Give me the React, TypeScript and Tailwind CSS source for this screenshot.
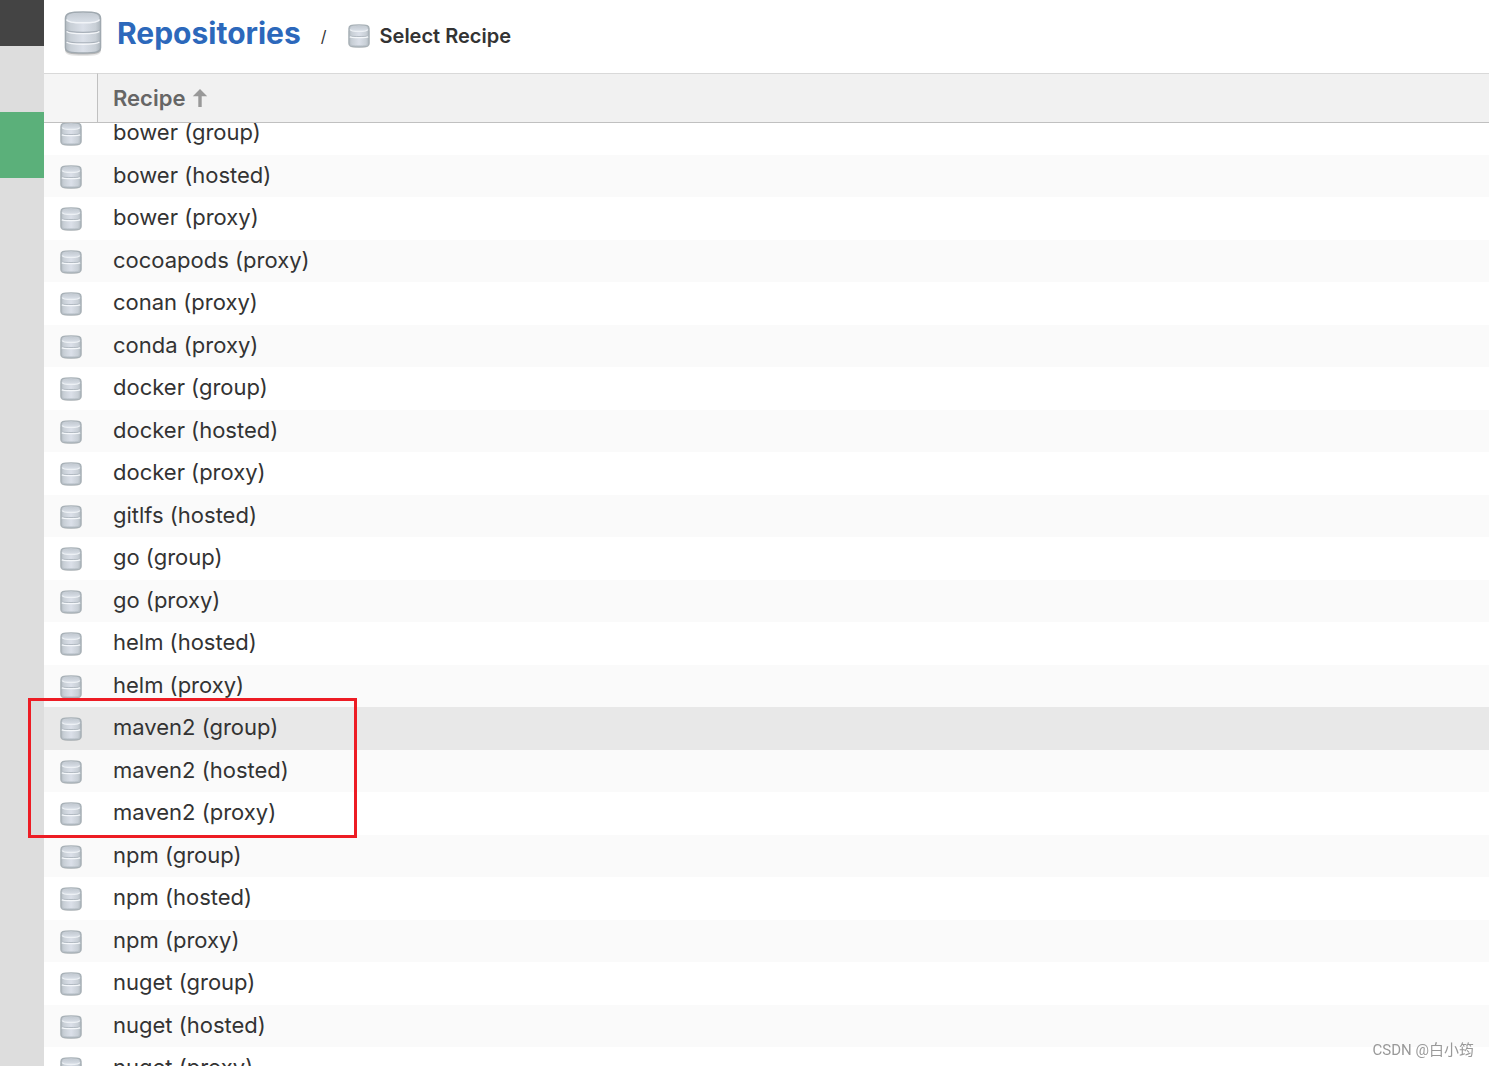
import React, { useEffect, useRef } from "react";
import clsx from "clsx";

const RECIPES = [
  "bower (group)",
  "bower (hosted)",
  "bower (proxy)",
  "cocoapods (proxy)",
  "conan (proxy)",
  "conda (proxy)",
  "docker (group)",
  "docker (hosted)",
  "docker (proxy)",
  "gitlfs (hosted)",
  "go (group)",
  "go (proxy)",
  "helm (hosted)",
  "helm (proxy)",
  "maven2 (group)",
  "maven2 (hosted)",
  "maven2 (proxy)",
  "npm (group)",
  "npm (hosted)",
  "npm (proxy)",
  "nuget (group)",
  "nuget (hosted)",
  "nuget (proxy)",
];

const SELECTED = "maven2 (group)";

// Gradients shared by every database icon on the page
const IconDefs = () => (
  <svg className="absolute w-0 h-0" aria-hidden="true">
    <defs>
      <linearGradient id="db-body" x1="0" x2="1" y1="0" y2="0">
        <stop offset="0" stopColor="#b3bbc2" />
        <stop offset="0.14" stopColor="#c8cfd6" />
        <stop offset="0.5" stopColor="#dbe0e9" />
        <stop offset="0.86" stopColor="#c8cfd6" />
        <stop offset="1" stopColor="#adb5bc" />
      </linearGradient>
      <linearGradient id="db-top" x1="0" x2="0" y1="0" y2="1">
        <stop offset="0" stopColor="#c3cad2" />
        <stop offset="1" stopColor="#d9dfe7" />
      </linearGradient>
    </defs>
  </svg>
);

const SmallDatabaseIcon = () => (
  <svg className="w-[22px] h-6 shrink-0" viewBox="0 0 22 24" fill="none" aria-hidden="true">
    <path d="M.5 7v13c0 2.800 2.500 3.900 10.500 3.900s10.500-1.100 10.500-3.900V7z" fill="#000" opacity="0.16" />
    <path
      d="M1 4.600C1 1.600 2.500.9 11 .9s10 .7 10 3.700v14.600c0 2.800-1.500 3.600-10 3.600S1 22 1 19.200z"
      fill="url(#db-body)"
      stroke="#a8b1b7"
      strokeWidth="1.400"
    />
    <path d="M2.400 4.700c0-2 2.600-2.700 8.600-2.700s8.600.7 8.600 2.700S17 7 11 7s-8.600-.3-8.600-2.300z" fill="url(#db-top)" />
    <path d="M2.200 5.400c.6 1.600 3.300 2 8.800 2s8.200-.4 8.800-2" stroke="#edf1f5" strokeWidth="1.300" />
    <path d="M1.200 11.400c.9.900 3.500 1.100 9.800 1.100s8.900-.2 9.800-1.100" stroke="#b2bac2" />
    <path d="M1.800 12.700c1 .8 3.400 1 9.200 1s8.200-.2 9.200-1" stroke="#f4f7fa" strokeWidth="1.300" />
    <path d="M2 20.600c1 1 3.600 1.300 9 1.300s8-.3 9-1.300" stroke="#bac2ca" />
  </svg>
);

const LargeDatabaseIcon = () => (
  <svg className="w-[38px] h-11 shrink-0 overflow-visible" viewBox="0 0 38 44" fill="none" aria-hidden="true">
    <path d="M1 12v27.500c0 4.500 5 5.500 18 5.500s18-1 18-5.500V12z" fill="#000" opacity="0.1" />
    <path d="M1 10v28c0 4.500 5 5.600 18 5.600S37 42.500 37 38V10z" fill="#000" opacity="0.2" />
    <path
      d="M1.400 7.500C1.400 2.200 6 1 19 1s17.600 1.200 17.600 6.500v29c0 4.400-4.600 5.500-17.600 5.500S1.400 40.900 1.400 36.500z"
      fill="url(#db-body)"
      stroke="#a0a9b0"
      strokeWidth="1.400"
    />
    <path d="M3 7c0-3.600 5-4.900 16-4.900S35 3.400 35 7s-5 4.300-16 4.300S3 10.600 3 7z" fill="url(#db-top)" />
    <path d="M2.600 8.400c1 2.800 6.400 3.400 16.400 3.400s15.400-.6 16.400-3.400" stroke="#f1f4f8" strokeWidth="1.400" />
    <path d="M1.800 19c1.600 1.800 6.700 2.300 17.200 2.300s15.600-.5 17.200-2.300" stroke="#a8b0b9" strokeWidth="1.200" />
    <path d="M2.600 20.400c1.800 1.600 6.900 2.200 16.400 2.200s14.600-.6 16.400-2.200" stroke="#f4f6f9" strokeWidth="1.400" />
    <path d="M1.800 29.600c1.600 1.800 6.700 2.300 17.200 2.300s15.600-.5 17.200-2.300" stroke="#a8b0b9" strokeWidth="1.200" />
    <path d="M2.600 31c1.800 1.600 6.900 2.200 16.400 2.200s14.600-.6 16.400-2.200" stroke="#f4f6f9" strokeWidth="1.400" />
  </svg>
);

const SortArrow = () => (
  <svg className="w-4 h-5" viewBox="0 0 16 20" aria-hidden="true">
    <path d="M8 1L15.200 8.200H9.700V19H6.300V8.200H.8z" fill="#999" />
  </svg>
);

export default function App() {
  const listRef = useRef<HTMLDivElement>(null);

  useEffect(() => {
    // The list opens slightly scrolled, first row tucked under the header
    if (listRef.current) listRef.current.scrollTop = 11;
  }, []);

  return (
    <div className="relative flex h-screen overflow-hidden bg-white font-['Inter',sans-serif] text-[#333]">
      <IconDefs />

      {/* Side strip */}
      <aside className="flex w-11 shrink-0 flex-col bg-[#ddd]">
        <div className="h-[46px] bg-[#444]" />
        <div className="mt-[66px] h-[66px] bg-[#5bb07a]" />
      </aside>

      <main className="flex min-w-0 flex-1 flex-col">
        {/* Breadcrumb */}
        <nav className="flex h-[73px] shrink-0 items-start pl-5 pt-[11px]" aria-label="Breadcrumb">
          <LargeDatabaseIcon />
          <a href="#repositories" className="ml-[15px] text-[30px] leading-[45px] font-bold text-[#2c68bb]">
            Repositories
          </a>
          <div className="mt-[13px] ml-5 flex items-center leading-6">
            <span>/</span>
            <h1 className="ml-[21px] flex items-center gap-[10px] text-[20px] font-semibold leading-6">
              <SmallDatabaseIcon />
              Select Recipe
            </h1>
          </div>
        </nav>

        {/* Recipe list */}
        <div ref={listRef} className="min-h-0 flex-1 overflow-y-auto [scrollbar-width:none]">
          <table className="w-full table-fixed border-separate border-spacing-0 text-left text-[22px]">
            <thead className="sticky top-0">
              <tr className="h-[50px]">
                <th
                  className="w-[54px] border-y border-r border-t-[#d9d9d9] border-r-[#c0c0c0] border-b-[#c0c0c0] bg-[#f5f5f5]"
                  aria-label="Type"
                />
                <th
                  className="border-y border-t-[#d9d9d9] border-b-[#c0c0c0] bg-[#f1f1f1] py-0 pl-[15px] font-semibold text-[#666]"
                  aria-sort="ascending"
                >
                  <button type="button" className="flex items-center gap-[7px]">
                    Recipe
                    <SortArrow />
                  </button>
                </th>
              </tr>
            </thead>
            <tbody>
              {RECIPES.map((name) => (
                <tr
                  key={name}
                  className={clsx(
                    "h-[43px] even:h-[42px]",
                    name === SELECTED ? "bg-[#e8e8e8]" : "even:bg-[#fafafa]",
                  )}
                >
                  <td className="p-0 pt-[10px] pl-4 align-top">
                    <SmallDatabaseIcon />
                  </td>
                  <td className="p-0 pt-1 pl-[15px] align-top leading-8">{name}</td>
                </tr>
              ))}
            </tbody>
          </table>
        </div>
      </main>

      {/* Highlight around the maven2 recipes */}
      <div className="pointer-events-none absolute top-[698px] left-7 h-[140px] w-[329px] border-3 border-[#ed1c24]" />

      <p className="absolute right-[15px] bottom-1 font-['Roboto','Noto_Sans_CJK_SC',sans-serif] text-[15px] leading-6 text-[#999]">
        CSDN @白小筠
      </p>
    </div>
  );
}
